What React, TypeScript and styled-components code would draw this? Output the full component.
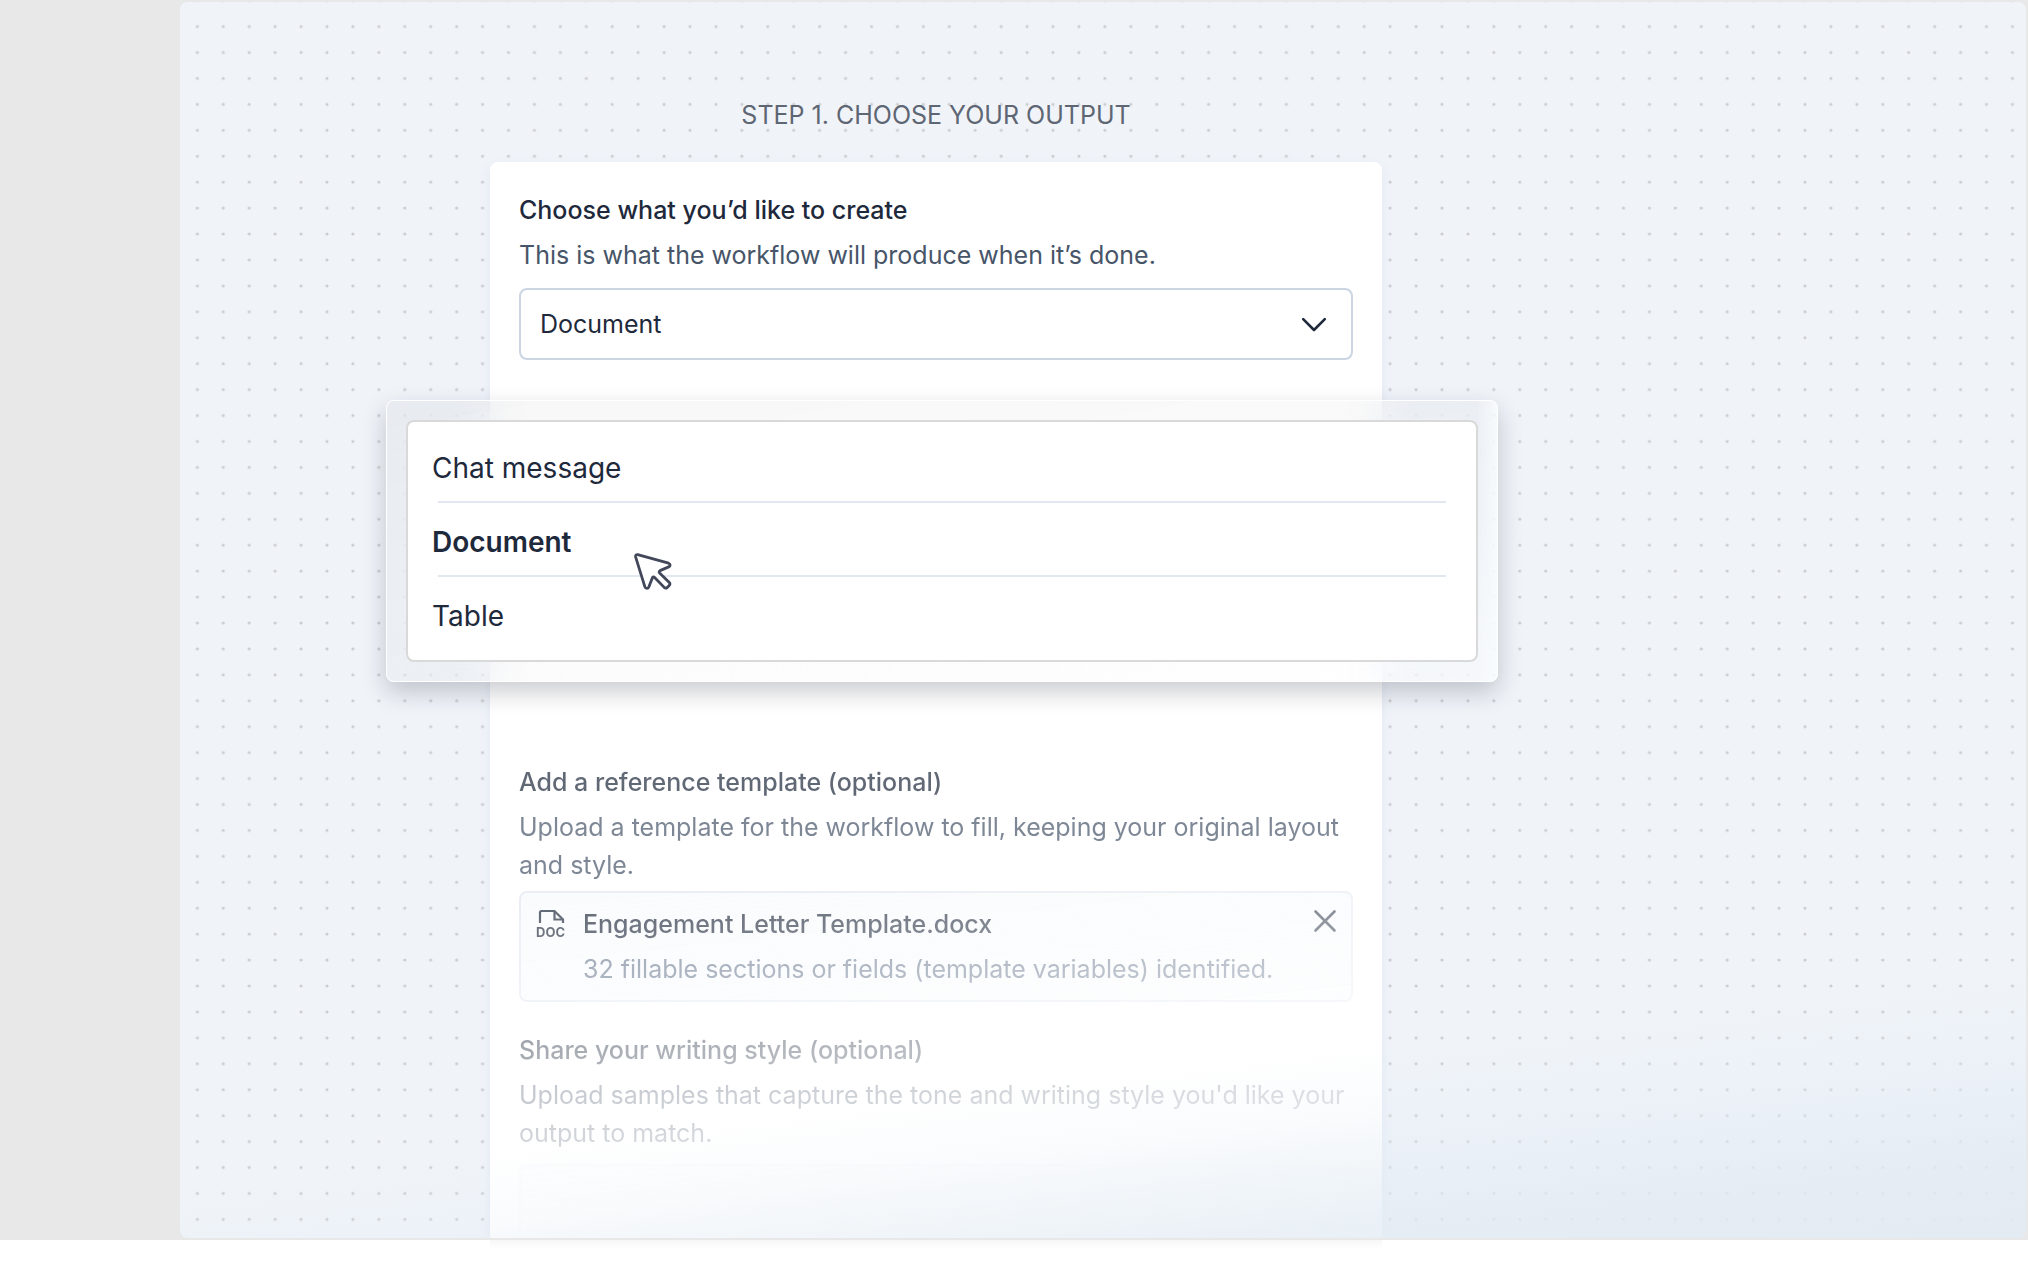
import React, { useState } from "react";
import styled, { createGlobalStyle, css } from "styled-components";

const GlobalStyle = createGlobalStyle`
  *, *::before, *::after { box-sizing: border-box; }
  body {
    margin: 0;
    background: #ffffff;
    font-family: Inter, "Liberation Sans", sans-serif;
    font-optical-sizing: none;
    -webkit-font-smoothing: antialiased;
  }
  h1, h2, p { margin: 0; }
`;

const columns = css`
  display: grid;
  grid-template-columns: 310fr 892fr 644fr;
`;

const bodyText = css`
  font-size: 25px;
  line-height: 38px;
`;

const Page = styled.div`
  display: flex;
  flex-direction: column;
  min-height: 100vh;
`;

const Stage = styled.main`
  flex: 1;
  display: flex;
  padding: 2px 2px 2px 180px;
  background: #e8e8e8;
`;

const Canvas = styled.div`
  ${columns}
  position: relative;
  flex: 1;
  min-width: 0;
  overflow: hidden;
  border-radius: 8px;
  background: #f0f4f9;
`;

const DotGrid = styled.svg`
  position: absolute;
  inset: 0;
  width: 100%;
  height: 100%;
`;

const Haze = styled.div`
  position: absolute;
  inset: 0;
  pointer-events: none;
  background: linear-gradient(
    173deg,
    rgba(226, 235, 243, 0) 81%,
    rgba(226, 235, 243, 0.2) 86%,
    rgba(226, 235, 243, 0.7) 93%,
    rgba(226, 234, 242, 0.95) 100%
  );
`;

const Column = styled.div`
  position: relative;
  grid-column: 2;
  display: flex;
  flex-direction: column;
  min-width: 0;
`;

const StepLabel = styled.h1`
  ${bodyText}
  padding: 94px 0 28px;
  font-weight: 400;
  text-align: center;
  text-transform: uppercase;
  font-optical-sizing: auto;
  color: #5f6673;
`;

const Card = styled.form`
  flex: 1;
  display: flex;
  flex-direction: column;
  padding: 29px 29px 0;
  border-radius: 8px 8px 0 0;
  background: #ffffff;
  box-shadow: 0 4px 12px rgba(130, 150, 200, 0.12);
`;

const Section = styled.section<{ $fill?: boolean }>`
  display: flex;
  flex-direction: column;
  flex: ${(p) => (p.$fill ? 1 : "none")};
`;

const Title = styled.h2`
  ${bodyText}
  font-weight: 500;
  color: #1e293b;
`;

const Hint = styled.p`
  ${bodyText}
  margin-top: 7px;
  color: #475569;
`;

const SelectField = styled.div`
  position: relative;
  margin-top: 14px;
`;

const Select = styled.select`
  display: block;
  width: 100%;
  height: 72px;
  padding: 0 64px 0 19px;
  appearance: none;
  border: 2px solid #cbd5e1;
  border-radius: 8px;
  background: #ffffff;
  font-family: inherit;
  ${bodyText}
  color: #1e293b;
`;

const Chevron = styled.svg`
  position: absolute;
  top: 28px;
  right: 25px;
  width: 28px;
  height: 18px;
  pointer-events: none;
`;

const Popover = styled.div`
  position: absolute;
  z-index: 2;
  top: 112px;
  left: -133px;
  right: -145px;
  padding: 19px;
  border: 1px solid #ffffff;
  border-radius: 8px;
  background:
    linear-gradient(to left, rgba(248, 252, 255, 0.8), rgba(248, 252, 255, 0) 20px),
    linear-gradient(
      170deg,
      rgba(120, 120, 120, 0.06) 0%,
      rgba(160, 160, 160, 0.04) 60%,
      rgba(255, 255, 255, 0.4) 100%
    );
  backdrop-filter: blur(20px);
  box-shadow: 0 10px 24px rgba(20, 25, 40, 0.22);
`;

const OptionList = styled.div`
  padding: 7px 22px 9px 24px;
  border: 2px solid #d9d9d9;
  border-radius: 8px;
  background: #ffffff;
`;

const Option = styled.button`
  position: relative;
  display: block;
  width: 100%;
  height: 74px;
  padding: 6px 0 2px;
  border: 0;
  background: none;
  font-family: inherit;
  font-size: 28px;
  line-height: 66px;
  font-weight: 400;
  text-align: left;
  color: #1e293b;

  &[aria-selected="true"] {
    font-weight: 600;
  }

  &:not(:last-child)::after {
    content: "";
    position: absolute;
    left: 6px;
    right: 8px;
    bottom: 0;
    height: 2px;
    background: #e2e8f1;
  }
`;

const Pointer = styled.svg`
  position: absolute;
  left: 245px;
  top: 151px;
  width: 42px;
  height: 42px;
  pointer-events: none;
`;

const FadingSections = styled.div`
  flex: 1;
  display: flex;
  flex-direction: column;
  gap: 29px;
  margin-top: 403px;
  opacity: 0.7;
  mask-image: linear-gradient(
    174deg,
    #000 26%,
    rgba(0, 0, 0, 0.45) 58%,
    rgba(0, 0, 0, 0.22) 80%,
    rgba(0, 0, 0, 0) 94%
  );
`;

const FileCard = styled.div`
  display: flex;
  align-items: flex-start;
  gap: 17px;
  margin-top: 7px;
  padding: 12px 14px 12px 15px;
  border: 2px solid #e2e8f0;
  border-radius: 8px;
  background: #f8fafc;
`;

const DocIcon = styled.svg`
  flex: none;
  width: 30px;
  height: 30px;
  margin-top: 4px;
`;

const FileText = styled.div`
  flex: 1;
  min-width: 0;
`;

const FileName = styled.p`
  ${bodyText}
  font-weight: 500;
  color: #1e293b;
`;

const FileNote = styled.p`
  ${bodyText}
  margin-top: 7px;
  color: #64748b;
`;

const RemoveButton = styled.button`
  display: flex;
  margin-top: 4px;
  padding: 0;
  border: 0;
  background: none;
`;

const DropArea = styled.div`
  flex: 1;
  min-height: 64px;
  margin-top: 12px;
  border: solid #eef2f8;
  border-width: 2px 2px 0;
  border-radius: 8px 8px 0 0;
  background: #f8fafc;
`;

const Footer = styled.footer`
  ${columns}
  height: 22px;
  padding: 0 2px 0 180px;
`;

const CardShadow = styled.div`
  grid-column: 2;
  height: 10px;
  background: linear-gradient(rgba(40, 50, 80, 0.04), rgba(40, 50, 80, 0));
`;

const outputs = ["Chat message", "Document", "Table"];

export default function App() {
  const [output, setOutput] = useState("Document");

  return (
    <>
      <GlobalStyle />
      <Page>
        <Stage>
          <Canvas>
            <DotGrid aria-hidden="true">
              <defs>
                <pattern id="dots" x="4.4" y="11.6" width="25.93" height="25.93" patternUnits="userSpaceOnUse">
                  <circle cx="12.95" cy="12.95" r="1.6" fill="#cbccce" />
                </pattern>
              </defs>
              <rect width="100%" height="100%" fill="url(#dots)" />
            </DotGrid>
            <Column>
              <StepLabel>Step 1. Choose your output</StepLabel>
              <Card>
                <Section>
                  <Title as="label" htmlFor="output">Choose what you’d like to create</Title>
                  <Hint>This is what the workflow will produce when it’s done.</Hint>
                  <SelectField>
                    <Select id="output" value={output} onChange={(e) => setOutput(e.target.value)}>
                      {outputs.map((name) => (
                        <option key={name}>{name}</option>
                      ))}
                    </Select>
                    <Chevron viewBox="0 0 28 18" fill="none" stroke="#1e293b" strokeWidth="2.6" strokeLinecap="round" strokeLinejoin="round">
                      <path d="M3.2 3.2 14 14 24.8 3.2" />
                    </Chevron>
                    <Popover>
                      <OptionList role="listbox" aria-label="Output">
                        {outputs.map((name) => (
                          <Option
                            key={name}
                            type="button"
                            role="option"
                            aria-selected={name === output}
                            onClick={() => setOutput(name)}
                          >
                            {name}
                          </Option>
                        ))}
                      </OptionList>
                      <Pointer viewBox="0 0 42 42" fill="#ffffff" stroke="#42475a" strokeWidth="2.8" strokeLinejoin="round">
                        <path d="M5.7 2.7 36.6 11.2C38.6 11.9 38.6 14 36.7 14.9L28 18.6C27 19.2 26.9 20.2 27.6 21L37.3 30.4C38.2 31.5 38.1 32.5 37.2 33.4L35.2 35.4C34.3 36.3 33.2 36.3 32.2 35.4L22.6 25.5C21.8 24.7 20.7 24.8 20.3 25.9L16.8 34.9C16 37 13.6 36.9 12.9 34.9L3.6 4.9C3.2 3.4 4.2 2.3 5.7 2.7Z" />
                      </Pointer>
                    </Popover>
                  </SelectField>
                </Section>

                <FadingSections>
                  <Section>
                    <Title>Add a reference template (optional)</Title>
                    <Hint>Upload a template for the workflow to fill, keeping your original layout and style.</Hint>
                    <FileCard>
                      <DocIcon viewBox="0 0 30 30" fill="none" stroke="#1e293b" strokeWidth="2.2">
                        <path d="M4 14V3.5Q4 2 5.5 2H18.5L27 10.5V14" />
                        <path d="M18.5 2V10.5H27" />
                        <text x="0" y="28" fontSize="13" fontWeight="700" fill="#1e293b" stroke="none">DOC</text>
                      </DocIcon>
                      <FileText>
                        <FileName>Engagement Letter Template.docx</FileName>
                        <FileNote>32 fillable sections or fields (template variables) identified.</FileNote>
                      </FileText>
                      <RemoveButton type="button" aria-label="Remove file">
                        <svg width="24" height="24" viewBox="0 0 24 24" stroke="#1e293b" strokeWidth="2.6" strokeLinecap="round">
                          <path d="M2.5 2.5 21.5 21.5M21.5 2.5 2.5 21.5" />
                        </svg>
                      </RemoveButton>
                    </FileCard>
                  </Section>
                  <Section $fill>
                    <Title>Share your writing style (optional)</Title>
                    <Hint>Upload samples that capture the tone and writing style you'd like your output to match.</Hint>
                    <DropArea />
                  </Section>
                </FadingSections>
              </Card>
            </Column>
            <Haze />
          </Canvas>
        </Stage>
        <Footer>
          <CardShadow />
        </Footer>
      </Page>
    </>
  );
}
